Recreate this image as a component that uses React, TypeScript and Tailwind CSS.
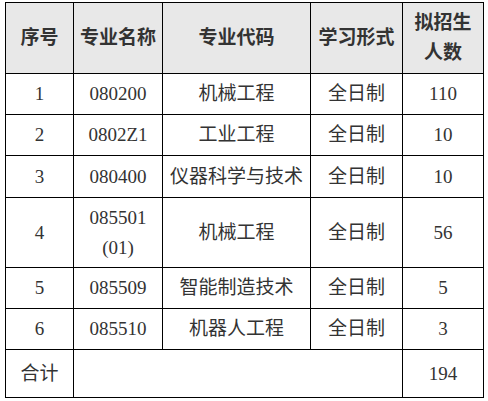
const rows = [
  { no: "1", code: ["080200"], name: "机械工程", mode: "全日制", count: "110", h: "h-[41px]" },
  { no: "2", code: ["0802Z1"], name: "工业工程", mode: "全日制", count: "10", h: "h-[41px]" },
  { no: "3", code: ["080400"], name: "仪器科学与技术", mode: "全日制", count: "10", h: "h-[42px]" },
  { no: "4", code: ["085501", "(01)"], name: "机械工程", mode: "全日制", count: "56", h: "h-[70px]" },
  { no: "5", code: ["085509"], name: "智能制造技术", mode: "全日制", count: "5", h: "h-[41px]" },
  { no: "6", code: ["085510"], name: "机器人工程", mode: "全日制", count: "3", h: "h-[41px]" },
];

const cell = "border border-black text-center align-middle p-0";

export default function App() {
  return (
    <div className="w-[488px] h-[401px] bg-white pt-[2px] pl-[5px]">
      <table
        className="table-fixed border-collapse w-[478px] text-[19px] leading-[30px] text-[#333]"
        style={{ fontFamily: '"Liberation Serif", "Noto Sans CJK SC", serif' }}
      >
        <colgroup>
          <col className="w-[68px]" />
          <col className="w-[89px]" />
          <col className="w-[148px]" />
          <col className="w-[92px]" />
          <col className="w-[81px]" />
        </colgroup>
        <thead>
          <tr className="h-[71px] bg-[#e8e8e8] font-bold">
            <th className={cell}>序号</th>
            <th className={cell}>专业名称</th>
            <th className={cell}>专业代码</th>
            <th className={cell}>学习形式</th>
            <th className={cell}>
              拟招生
              <br />
              人数
            </th>
          </tr>
        </thead>
        <tbody>
          {rows.map((r) => (
            <tr key={r.no} className={r.h}>
              <td className={cell}>{r.no}</td>
              <td className={cell}>
                {r.code.map((c, i) => (
                  <div key={i}>{c}</div>
                ))}
              </td>
              <td className={`${cell} whitespace-nowrap`}>{r.name}</td>
              <td className={cell}>{r.mode}</td>
              <td className={cell}>{r.count}</td>
            </tr>
          ))}
          <tr className="h-[48px]">
            <td className={cell}>合计</td>
            <td className={cell} colSpan={3}></td>
            <td className={cell}>194</td>
          </tr>
        </tbody>
      </table>
    </div>
  );
}
